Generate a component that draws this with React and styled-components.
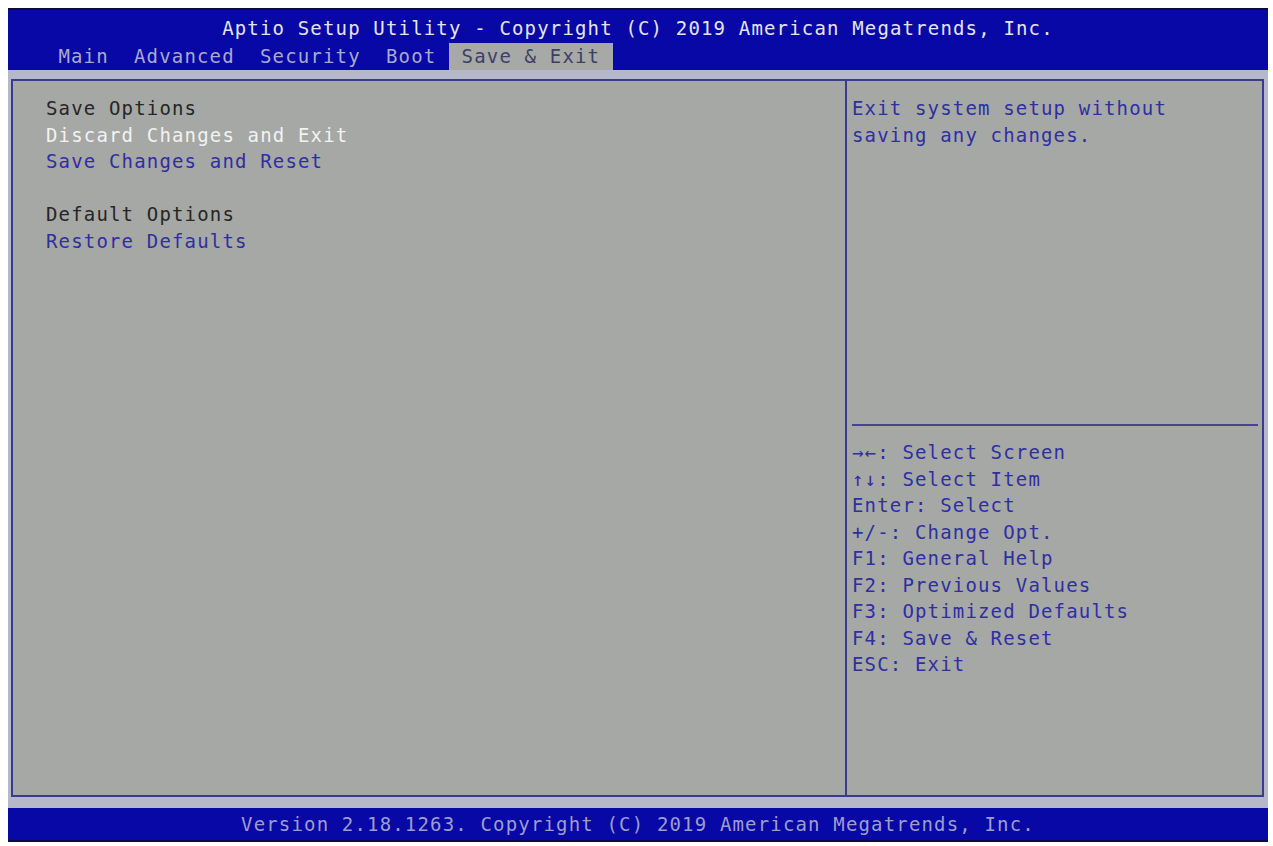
import React from 'react';
import styled, { createGlobalStyle } from 'styled-components';

// one text-mode column of the Aptio screen
const COL = 12.6;

const GlobalStyle = createGlobalStyle`
  html, body {
    margin: 0;
    padding: 0;
    background: #ffffff;
  }
  body {
    font-family: "DejaVu Sans Mono", "Liberation Mono", monospace;
  }
`;

const Frame = styled.div`
  padding: 8px 0 0 8px;
  width: 1273px;
  height: 846px;
  box-sizing: border-box;
`;

const Screen = styled.div`
  width: 1260px;
  display: flex;
  flex-direction: column;
  font-size: 19px;
  letter-spacing: ${COL - 19 * 0.602}px;
  white-space: pre;
`;

const Header = styled.div`
  height: 62px;
  box-sizing: border-box;
  background: #0808a6;
  border-top: 2px solid #0c0c3a;
  display: flex;
  flex-direction: column;
`;

const Title = styled.div`
  height: 33px;
  display: flex;
  align-items: center;
  justify-content: center;
  padding-top: 2px;
  box-sizing: border-box;
  color: #e4e4ee;
`;

const TabRow = styled.div`
  display: flex;
  height: 27px;
  padding-left: ${COL * 3}px;
`;

const Tab = styled.div`
  padding: 0 ${COL}px;
  height: 27px;
  line-height: 27px;
  color: ${(p) => (p.$active ? '#3e3e66' : '#a9a9cf')};
  background: ${(p) => (p.$active ? '#a6a9a6' : 'transparent')};
`;

const Body = styled.div`
  height: 738px;
  box-sizing: border-box;
  background: #b7b7ca;
  padding: 9px 4px 11px 3px;
`;

const Panel = styled.div`
  height: 100%;
  box-sizing: border-box;
  border: 2px solid #3b3b8e;
  background: #a5a8a5;
  display: grid;
  grid-template-columns: 832px 1fr;
`;

const LeftPane = styled.div`
  padding: 14px 0 0 33px;
  display: flex;
  flex-direction: column;
`;

const RightPane = styled.div`
  border-left: 2px solid #3b3b8e;
  display: flex;
  flex-direction: column;
`;

const Line = styled.div`
  height: 26.5px;
  line-height: 26.5px;
  color: ${(p) =>
    p.$kind === 'label' ? '#262626' : p.$kind === 'selected' ? '#f2f2f2' : '#2f2fa2'};
`;

const HelpTop = styled.div`
  height: 343px;
  box-sizing: border-box;
  padding: 14px 0 0 5px;
`;

const Rule = styled.div`
  height: 2px;
  margin: 0 4px 0 5px;
  background: #45458f;
`;

const KeyList = styled.div`
  padding: 13px 0 0 5px;
`;

const Footer = styled.div`
  height: 34px;
  box-sizing: border-box;
  background: #0808a6;
  border-bottom: 2px solid #0c0c3a;
  display: flex;
  align-items: center;
  justify-content: center;
  color: #9d9dcc;
`;

const tabs = ['Main', 'Advanced', 'Security', 'Boot', 'Save & Exit'];

const items = [
  { text: 'Save Options', kind: 'label' },
  { text: 'Discard Changes and Exit', kind: 'selected' },
  { text: 'Save Changes and Reset', kind: 'item' },
  { text: ' ', kind: 'label' },
  { text: 'Default Options', kind: 'label' },
  { text: 'Restore Defaults', kind: 'item' },
];

const keys = [
  '\u2192\u2190: Select Screen',
  '\u2191\u2193: Select Item',
  'Enter: Select',
  '+/-: Change Opt.',
  'F1: General Help',
  'F2: Previous Values',
  'F3: Optimized Defaults',
  'F4: Save & Reset',
  'ESC: Exit',
];

const App = () => (
  <>
    <GlobalStyle />
    <Frame>
      <Screen>
        <Header>
          <Title>Aptio Setup Utility - Copyright (C) 2019 American Megatrends, Inc.</Title>
          <TabRow>
            {tabs.map((t) => (
              <Tab key={t} $active={t === 'Save & Exit'}>
                {t}
              </Tab>
            ))}
          </TabRow>
        </Header>

        <Body>
          <Panel>
            <LeftPane>
              {items.map((it, i) => (
                <Line key={i} $kind={it.kind}>
                  {it.text}
                </Line>
              ))}
            </LeftPane>

            <RightPane>
              <HelpTop>
                <Line>Exit system setup without</Line>
                <Line>saving any changes.</Line>
              </HelpTop>
              <Rule />
              <KeyList>
                {keys.map((k) => (
                  <Line key={k}>{k}</Line>
                ))}
              </KeyList>
            </RightPane>
          </Panel>
        </Body>

        <Footer>Version 2.18.1263. Copyright (C) 2019 American Megatrends, Inc.</Footer>
      </Screen>
    </Frame>
  </>
);

export default App;
